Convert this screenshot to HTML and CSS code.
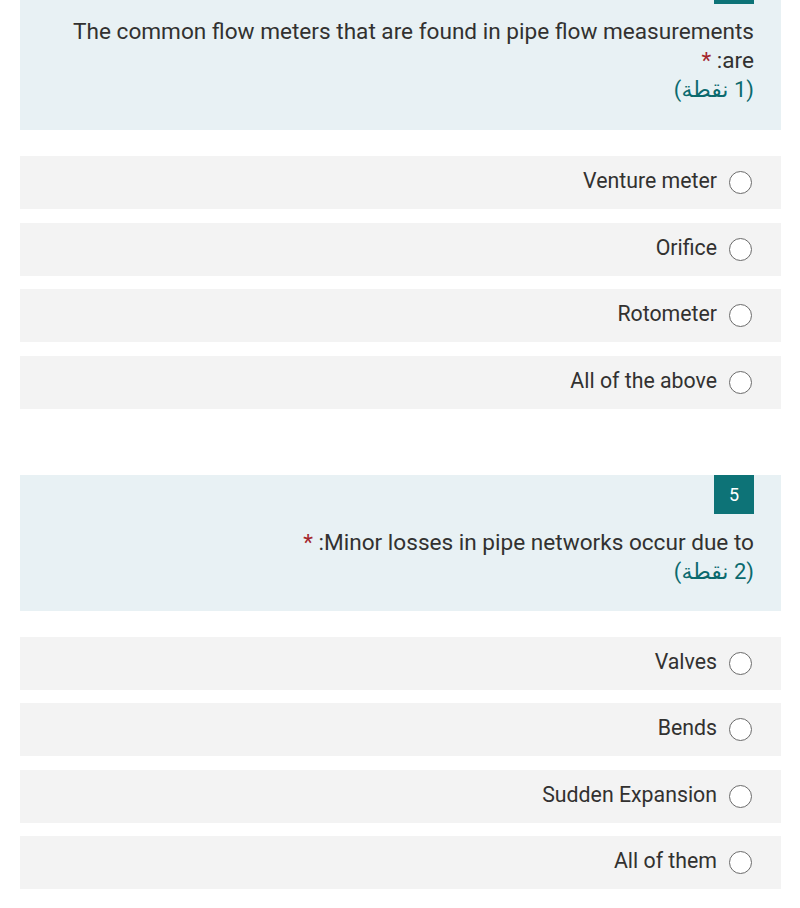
FILE: index.html
```html
<!DOCTYPE html>
<html lang="ar" dir="rtl">
<head>
<meta charset="utf-8">
<title>Form</title>
<link rel="stylesheet" href="styles.css">
</head>
<body>
<div class="page">
  <section class="question first">
    <div class="q-head">
      <div class="q-badge" aria-label="4"></div>
      <div class="q-title">The common flow meters that are found in pipe flow measurements are: <span class="req">*</span></div>
      <div class="q-points">(1 نقطة)</div>
    </div>
    <div class="options">
      <label class="option"><span class="radio"></span><span class="opt-text">Venture meter</span></label>
      <label class="option"><span class="radio"></span><span class="opt-text">Orifice</span></label>
      <label class="option"><span class="radio"></span><span class="opt-text">Rotometer</span></label>
      <label class="option"><span class="radio"></span><span class="opt-text">All of the above</span></label>
    </div>
  </section>
  <section class="question">
    <div class="q-head">
      <div class="q-badge">5</div>
      <div class="q-title">Minor losses in pipe networks occur due to: <span class="req">*</span></div>
      <div class="q-points">(2 نقطة)</div>
    </div>
    <div class="options">
      <label class="option"><span class="radio"></span><span class="opt-text">Valves</span></label>
      <label class="option"><span class="radio"></span><span class="opt-text">Bends</span></label>
      <label class="option"><span class="radio"></span><span class="opt-text">Sudden Expansion</span></label>
      <label class="option"><span class="radio"></span><span class="opt-text">All of them</span></label>
    </div>
  </section>
</div>
</body>
</html>
```
FILE: styles.css
```css
html, body {
  margin: 0;
  padding: 0;
  background: #ffffff;
}
body {
  font-family: Roboto, "Noto Sans", "DejaVu Sans", sans-serif;
  color: #323130;
  overflow: hidden;
}
.page {
  padding: 0 19px 0 20px;
  margin-top: -35px;
}
.question + .question {
  margin-top: 66px;
}
.q-head {
  background: #e8f1f4;
  padding: 0 27px 25px 27px;
}
.q-badge {
  width: 40px;
  height: 39px;
  background: #0d7377;
  color: #ffffff;
  font-size: 18px;
  display: flex;
  align-items: center;
  justify-content: center;
  margin-bottom: 14px;
}
.q-title {
  font-size: 22.6px;
  line-height: 29px;
}
.req {
  color: #a4262c;
}
.q-points {
  font-size: 22px;
  line-height: 29px;
  color: #0b6a6e;
}
.first .q-head {
  padding-bottom: 26px;
}
.first .q-badge {
  margin-bottom: 13px;
}
.options {
  margin-top: 26px;
  display: flex;
  flex-direction: column;
  gap: 13.5px;
}
.option {
  height: 53px;
  background: #f3f3f3;
  display: flex;
  align-items: center;
  gap: 12px;
  padding: 0 29px;
}
.radio {
  width: 21px;
  height: 21px;
  border: 1.2px solid #6b6b6b;
  border-radius: 50%;
  background: #ffffff;
  flex: none;
}
.opt-text {
  font-size: 21.3px;
  line-height: 29px;
  margin-bottom: 4px;
}
```
